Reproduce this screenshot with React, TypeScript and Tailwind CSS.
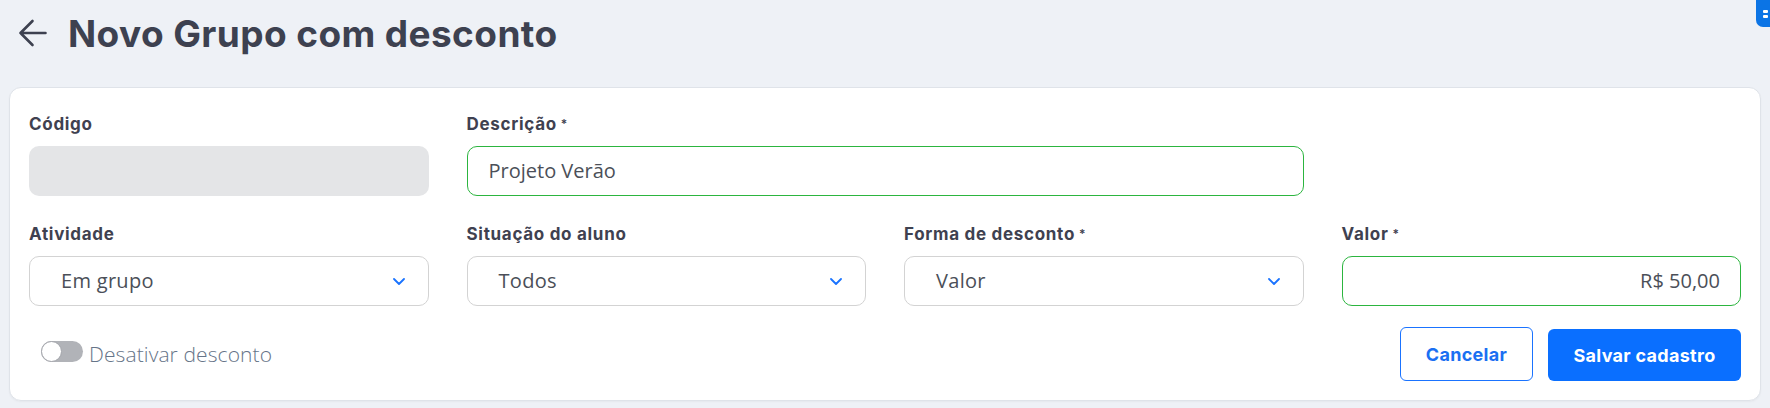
import { ReactNode } from "react";

const sans = "font-['Inter','Liberation_Sans',sans-serif]";
const soft = "font-['Open_Sans','Liberation_Sans',sans-serif]";

function Chevron() {
  return (
    <svg width="12" height="7" viewBox="0 0 12 7" fill="none" className="shrink-0">
      <path d="M1 1l5 5 5-5" stroke="#1a73ff" strokeWidth="1.8" strokeLinecap="round" strokeLinejoin="round" />
    </svg>
  );
}

function Field({ label, required, className, children }: { label: string; required?: boolean; className?: string; children: ReactNode }) {
  return (
    <div className={className}>
      <div className={`${sans} mb-[12px] text-[17px] font-bold leading-[20px] tracking-[0.7px] text-[#3f4150]`}>
        {label}
        {required && <span className="ml-[4px] align-top text-[12px] font-semibold">*</span>}
      </div>
      {children}
    </div>
  );
}

function Select({ value }: { value: string }) {
  return (
    <div className="flex h-[50px] items-center justify-between rounded-[10px] border border-[#d3d3d3] bg-white pl-[31px] pr-[23px]">
      <span className={`${soft} text-[20px] tracking-[0.3px] text-[#4b4f58]`}>{value}</span>
      <Chevron />
    </div>
  );
}

export default function App() {
  return (
    <div className="relative h-[408px] w-full overflow-hidden bg-[#eef1f6]">
      <div className="absolute right-0 top-0 flex h-[27px] w-[14px] items-center justify-end rounded-bl-[7px] bg-[#0b74e5] pr-[2px]">
        <div className="flex flex-col gap-[2px]">
          <div className="h-[3px] w-[5px] rounded-[1px] bg-white" />
          <div className="h-[3px] w-[5px] rounded-[1px] bg-white" />
        </div>
      </div>

      <header className="flex h-[66px] items-center pl-[18px]">
        <svg width="29" height="28" viewBox="0 0 29 28" fill="none">
          <path d="M27.5 14H2.5M14.5 2L2.5 14l12 12" stroke="#3d4150" strokeWidth="2.6" strokeLinecap="round" strokeLinejoin="round" />
        </svg>
        <h1 className={`${sans} ml-[21px] text-[37px] font-bold leading-none tracking-[0.4px] text-[#3d4150]`}>
          Novo Grupo com desconto
        </h1>
      </header>

      <section className="mx-[9px] mt-[21px] rounded-[12px] border border-[#dfe3e9] bg-white px-[19px] pb-[19px] pt-[26px] shadow-[0_1px_2px_rgba(0,0,0,0.04)]">
        <div className="grid grid-cols-4 gap-x-[38px] gap-y-[28px]">
          <Field label="Código">
            <div className="h-[50px] rounded-[10px] bg-[#e4e5e7]" />
          </Field>
          <Field label="Descrição" required className="col-span-2">
            <div className="flex h-[50px] items-center rounded-[10px] border border-[#2cb53f] bg-white px-[21px]">
              <span className={`${soft} text-[20px] text-[#4b4f58]`}>Projeto Verão</span>
            </div>
          </Field>
          <div />
          <Field label="Atividade">
            <Select value="Em grupo" />
          </Field>
          <Field label="Situação do aluno">
            <Select value="Todos" />
          </Field>
          <Field label="Forma de desconto" required>
            <Select value="Valor" />
          </Field>
          <Field label="Valor" required>
            <div className="flex h-[50px] items-center justify-end rounded-[10px] border border-[#2cb53f] bg-white px-[20px]">
              <span className={`${soft} text-[20px] text-[#4b4f58]`}>R$ 50,00</span>
            </div>
          </Field>
        </div>

        <div className="mt-[21px] flex items-start justify-between">
          <div className="ml-[12px] mt-[10px] flex items-center gap-[6px]">
            <div className="flex h-[21px] w-[42px] items-center rounded-full bg-[#b1b3b8]">
              <div className="h-[21px] w-[21px] rounded-full border-[1.5px] border-[#a3a5ab] bg-white" />
            </div>
            <span className={`${soft} mt-[5px] text-[21px] font-light leading-[24px] tracking-[0.1px] text-[#667488]`}>Desativar desconto</span>
          </div>
          <div className="flex items-end gap-[15px]">
            <button className={`${sans} h-[54px] w-[133px] rounded-[6px] border border-[#1a73ff] bg-white text-[18px] font-bold tracking-[0.3px] text-[#1a6ff2]`}>
              Cancelar
            </button>
            <button className={`${sans} h-[52px] w-[193px] rounded-[6px] bg-[#0a6fff] text-[18px] font-bold tracking-[0.3px] text-white`}>
              Salvar cadastro
            </button>
          </div>
        </div>
      </section>
    </div>
  );
}
